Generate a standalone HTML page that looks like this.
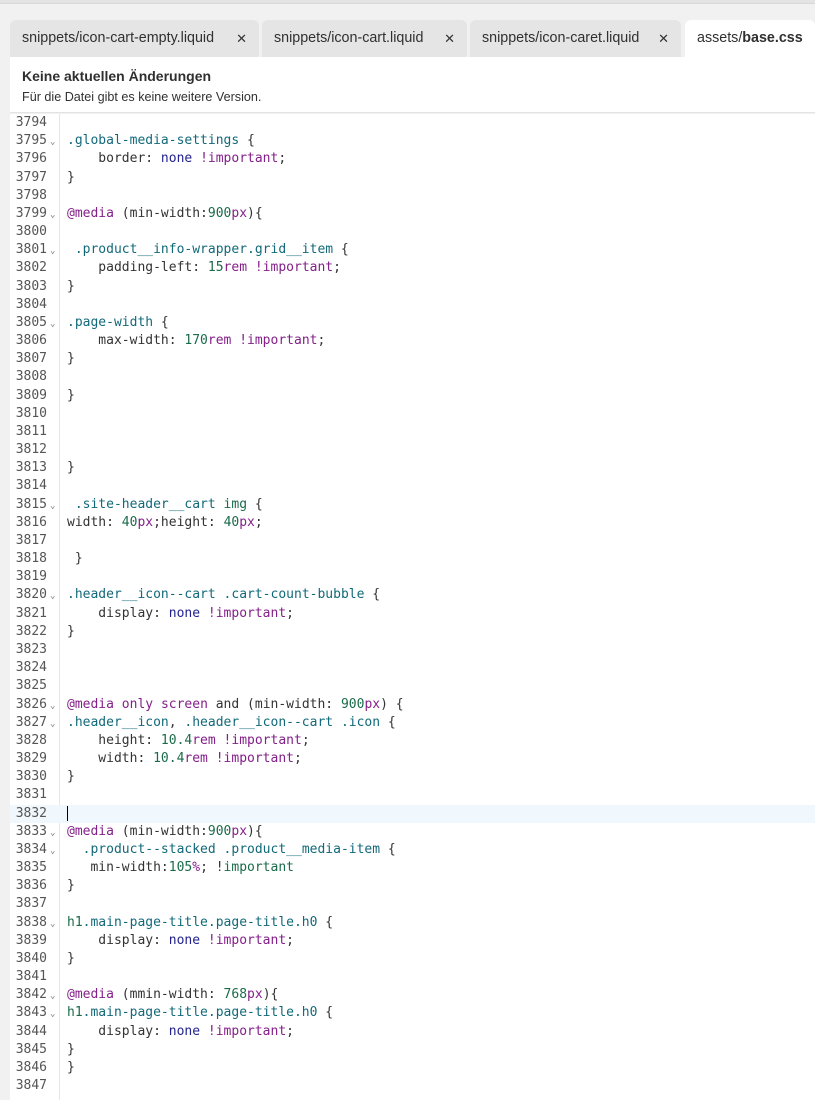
<!DOCTYPE html>
<html><head><meta charset="utf-8"><style>
*{margin:0;padding:0;box-sizing:border-box}
body{width:815px;height:1100px;background:#f1f1f1;position:relative;overflow:hidden;font-family:"Liberation Sans",sans-serif}
.top{position:absolute;left:0;top:0;width:815px;height:4px;background:#e4e4e4;border-bottom:1px solid #d8d8d8}
.tab{position:absolute;top:20px;height:37px;background:#e5e5e5;border-radius:6px 6px 0 0;font-size:14.3px;color:#303030;line-height:37px;padding-left:12px}
.tab .x{position:absolute;right:12px;top:0;font-size:13px;color:#333}
.act{background:#fff}
.hdr{position:absolute;left:10px;top:57px;width:805px;height:56px;background:#fff;border-bottom:1px solid #e3e3e3}
.hdr .t{position:absolute;left:12px;top:11px;font-size:14px;font-weight:bold;color:#303030}
.hdr .s{position:absolute;left:12px;top:33px;font-size:12.6px;color:#303030}
.code{position:absolute;left:10px;top:114px;width:805px;height:986px;background:#fff}
.gut{position:absolute;left:0;top:0;width:50px;height:986px;background:#fff;border-right:1px solid #e6e6e6}
.lines{position:absolute;left:0;top:0;width:805px;font-family:"DejaVu Sans Mono","Liberation Mono",monospace;font-size:13px}
.l{height:18.18px;line-height:18.18px;position:relative;white-space:pre;color:#333}
.l .n{position:absolute;left:0;width:37px;text-align:right;color:#555}
.l .f{position:absolute;left:40px;top:1px;font-size:9px;color:#777}
.l .c{position:absolute;left:57px}
.hl{background:#f0f7fd}
.s{color:#12697a}.k{color:#22228f}.p{color:#84208a}.g{color:#1a6b4a}
.cur{display:inline-block;width:1px;height:15px;background:#000;vertical-align:middle}
</style></head><body>
<div class="top"></div>
<div class="tab" style="left:10px;width:249px">snippets/icon-cart-empty.liquid<span class="x">✕</span></div>
<div class="tab" style="left:262px;width:205px">snippets/icon-cart.liquid<span class="x">✕</span></div>
<div class="tab" style="left:470px;width:211px">snippets/icon-caret.liquid<span class="x">✕</span></div>
<div class="tab act" style="left:685px;width:130px">assets/<b>base.css</b></div>
<div class="hdr"><div class="t">Keine aktuellen Änderungen</div><div class="s">Für die Datei gibt es keine weitere Version.</div></div>
<div class="code"><div class="gut"></div>
<div class="lines">
<div class="l"><span class="n">3794</span><span class="c"></span></div>
<div class="l"><span class="n">3795</span><span class="f">⌄</span><span class="c"><span class="s">.global-media-settings</span> {</span></div>
<div class="l"><span class="n">3796</span><span class="c">    border: <span class="k">none</span> <span class="p">!important</span>;</span></div>
<div class="l"><span class="n">3797</span><span class="c">}</span></div>
<div class="l"><span class="n">3798</span><span class="c"></span></div>
<div class="l"><span class="n">3799</span><span class="f">⌄</span><span class="c"><span class="p">@media</span> (min-width:<span class="g">900</span><span class="p">px</span>){</span></div>
<div class="l"><span class="n">3800</span><span class="c"></span></div>
<div class="l"><span class="n">3801</span><span class="f">⌄</span><span class="c"> <span class="s">.product__info-wrapper.grid__item</span> {</span></div>
<div class="l"><span class="n">3802</span><span class="c">    padding-left: <span class="g">15</span><span class="p">rem</span> <span class="p">!important</span>;</span></div>
<div class="l"><span class="n">3803</span><span class="c">}</span></div>
<div class="l"><span class="n">3804</span><span class="c"></span></div>
<div class="l"><span class="n">3805</span><span class="f">⌄</span><span class="c"><span class="s">.page-width</span> {</span></div>
<div class="l"><span class="n">3806</span><span class="c">    max-width: <span class="g">170</span><span class="p">rem</span> <span class="p">!important</span>;</span></div>
<div class="l"><span class="n">3807</span><span class="c">}</span></div>
<div class="l"><span class="n">3808</span><span class="c"></span></div>
<div class="l"><span class="n">3809</span><span class="c">}</span></div>
<div class="l"><span class="n">3810</span><span class="c"></span></div>
<div class="l"><span class="n">3811</span><span class="c"></span></div>
<div class="l"><span class="n">3812</span><span class="c"></span></div>
<div class="l"><span class="n">3813</span><span class="c">}</span></div>
<div class="l"><span class="n">3814</span><span class="c"></span></div>
<div class="l"><span class="n">3815</span><span class="f">⌄</span><span class="c"> <span class="s">.site-header__cart</span> <span class="g">img</span> {</span></div>
<div class="l"><span class="n">3816</span><span class="c">width: <span class="g">40</span><span class="p">px</span>;height: <span class="g">40</span><span class="p">px</span>;</span></div>
<div class="l"><span class="n">3817</span><span class="c"></span></div>
<div class="l"><span class="n">3818</span><span class="c"> }</span></div>
<div class="l"><span class="n">3819</span><span class="c"></span></div>
<div class="l"><span class="n">3820</span><span class="f">⌄</span><span class="c"><span class="s">.header__icon--cart</span> <span class="s">.cart-count-bubble</span> {</span></div>
<div class="l"><span class="n">3821</span><span class="c">    display: <span class="k">none</span> <span class="p">!important</span>;</span></div>
<div class="l"><span class="n">3822</span><span class="c">}</span></div>
<div class="l"><span class="n">3823</span><span class="c"></span></div>
<div class="l"><span class="n">3824</span><span class="c"></span></div>
<div class="l"><span class="n">3825</span><span class="c"></span></div>
<div class="l"><span class="n">3826</span><span class="f">⌄</span><span class="c"><span class="p">@media</span> <span class="p">only</span> <span class="p">screen</span> and (min-width: <span class="g">900</span><span class="p">px</span>) {</span></div>
<div class="l"><span class="n">3827</span><span class="f">⌄</span><span class="c"><span class="s">.header__icon</span>, <span class="s">.header__icon--cart</span> <span class="s">.icon</span> {</span></div>
<div class="l"><span class="n">3828</span><span class="c">    height: <span class="g">10.4</span><span class="p">rem</span> <span class="p">!important</span>;</span></div>
<div class="l"><span class="n">3829</span><span class="c">    width: <span class="g">10.4</span><span class="p">rem</span> <span class="p">!important</span>;</span></div>
<div class="l"><span class="n">3830</span><span class="c">}</span></div>
<div class="l"><span class="n">3831</span><span class="c"></span></div>
<div class="l hl"><span class="n">3832</span><span class="c"><span class="cur"></span></span></div>
<div class="l"><span class="n">3833</span><span class="f">⌄</span><span class="c"><span class="p">@media</span> (min-width:<span class="g">900</span><span class="p">px</span>){</span></div>
<div class="l"><span class="n">3834</span><span class="f">⌄</span><span class="c">  <span class="s">.product--stacked</span> <span class="s">.product__media-item</span> {</span></div>
<div class="l"><span class="n">3835</span><span class="c">   min-width:<span class="g">105</span><span class="p">%</span>; !<span class="g">important</span></span></div>
<div class="l"><span class="n">3836</span><span class="c">}</span></div>
<div class="l"><span class="n">3837</span><span class="c"></span></div>
<div class="l"><span class="n">3838</span><span class="f">⌄</span><span class="c"><span class="g">h1</span><span class="s">.main-page-title.page-title.h0</span> {</span></div>
<div class="l"><span class="n">3839</span><span class="c">    display: <span class="k">none</span> <span class="p">!important</span>;</span></div>
<div class="l"><span class="n">3840</span><span class="c">}</span></div>
<div class="l"><span class="n">3841</span><span class="c"></span></div>
<div class="l"><span class="n">3842</span><span class="f">⌄</span><span class="c"><span class="p">@media</span> (mmin-width: <span class="g">768</span><span class="p">px</span>){</span></div>
<div class="l"><span class="n">3843</span><span class="f">⌄</span><span class="c"><span class="g">h1</span><span class="s">.main-page-title.page-title.h0</span> {</span></div>
<div class="l"><span class="n">3844</span><span class="c">    display: <span class="k">none</span> <span class="p">!important</span>;</span></div>
<div class="l"><span class="n">3845</span><span class="c">}</span></div>
<div class="l"><span class="n">3846</span><span class="c">}</span></div>
<div class="l"><span class="n">3847</span><span class="c"></span></div>
</div></div>
</body></html>
